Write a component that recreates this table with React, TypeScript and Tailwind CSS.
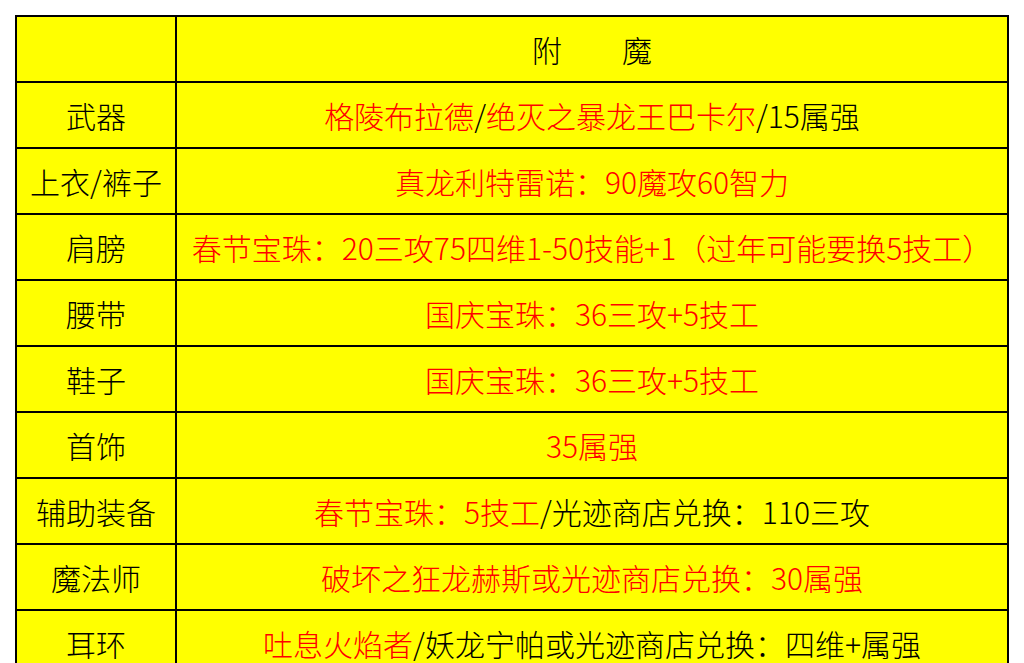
type Seg = { t: string; red?: boolean };

const rows: { label: string; segs: Seg[] }[] = [
  {
    label: "武器",
    segs: [
      { t: "格陵布拉德", red: true },
      { t: "/" },
      { t: "绝灭之暴龙王巴卡尔", red: true },
      { t: "/15属强" },
    ],
  },
  { label: "上衣/裤子", segs: [{ t: "真龙利特雷诺：90魔攻60智力", red: true }] },
  { label: "肩膀", segs: [{ t: "春节宝珠：20三攻75四维1-50技能+1（过年可能要换5技工）", red: true }] },
  { label: "腰带", segs: [{ t: "国庆宝珠：36三攻+5技工", red: true }] },
  { label: "鞋子", segs: [{ t: "国庆宝珠：36三攻+5技工", red: true }] },
  { label: "首饰", segs: [{ t: "35属强", red: true }] },
  {
    label: "辅助装备",
    segs: [
      { t: "春节宝珠：5技工", red: true },
      { t: "/光迹商店兑换：110三攻" },
    ],
  },
  { label: "魔法师", segs: [{ t: "破坏之狂龙赫斯或光迹商店兑换：30属强", red: true }] },
  {
    label: "耳环",
    segs: [
      { t: "吐息火焰者", red: true },
      { t: "/妖龙宁帕或光迹商店兑换：四维+属强" },
    ],
  },
];

const cell =
  "flex h-[66px] items-center justify-center whitespace-nowrap border-b-2 border-r-2 border-black bg-[#ffff00]";

export default function App() {
  return (
    <div className="min-h-screen bg-white pb-8 pl-[15px] pt-[15px] font-['Noto_Sans_CJK_SC',sans-serif] text-[30px] font-light leading-none text-black">
      <div className="grid w-[994px] grid-cols-[160px_832px] border-l-2 border-t-2 border-black">
        {/* header */}
        <div className={cell} />
        <div className={cell}>附　　魔</div>

        {rows.map((row) => (
          <div key={row.label} className="contents">
            <div className={cell}>{row.label}</div>
            <div className={cell}>
              {row.segs.map((s, i) => (
                <span key={i} className={s.red ? "text-[#ff0000]" : "text-black"}>
                  {s.t}
                </span>
              ))}
            </div>
          </div>
        ))}
      </div>
    </div>
  );
}
